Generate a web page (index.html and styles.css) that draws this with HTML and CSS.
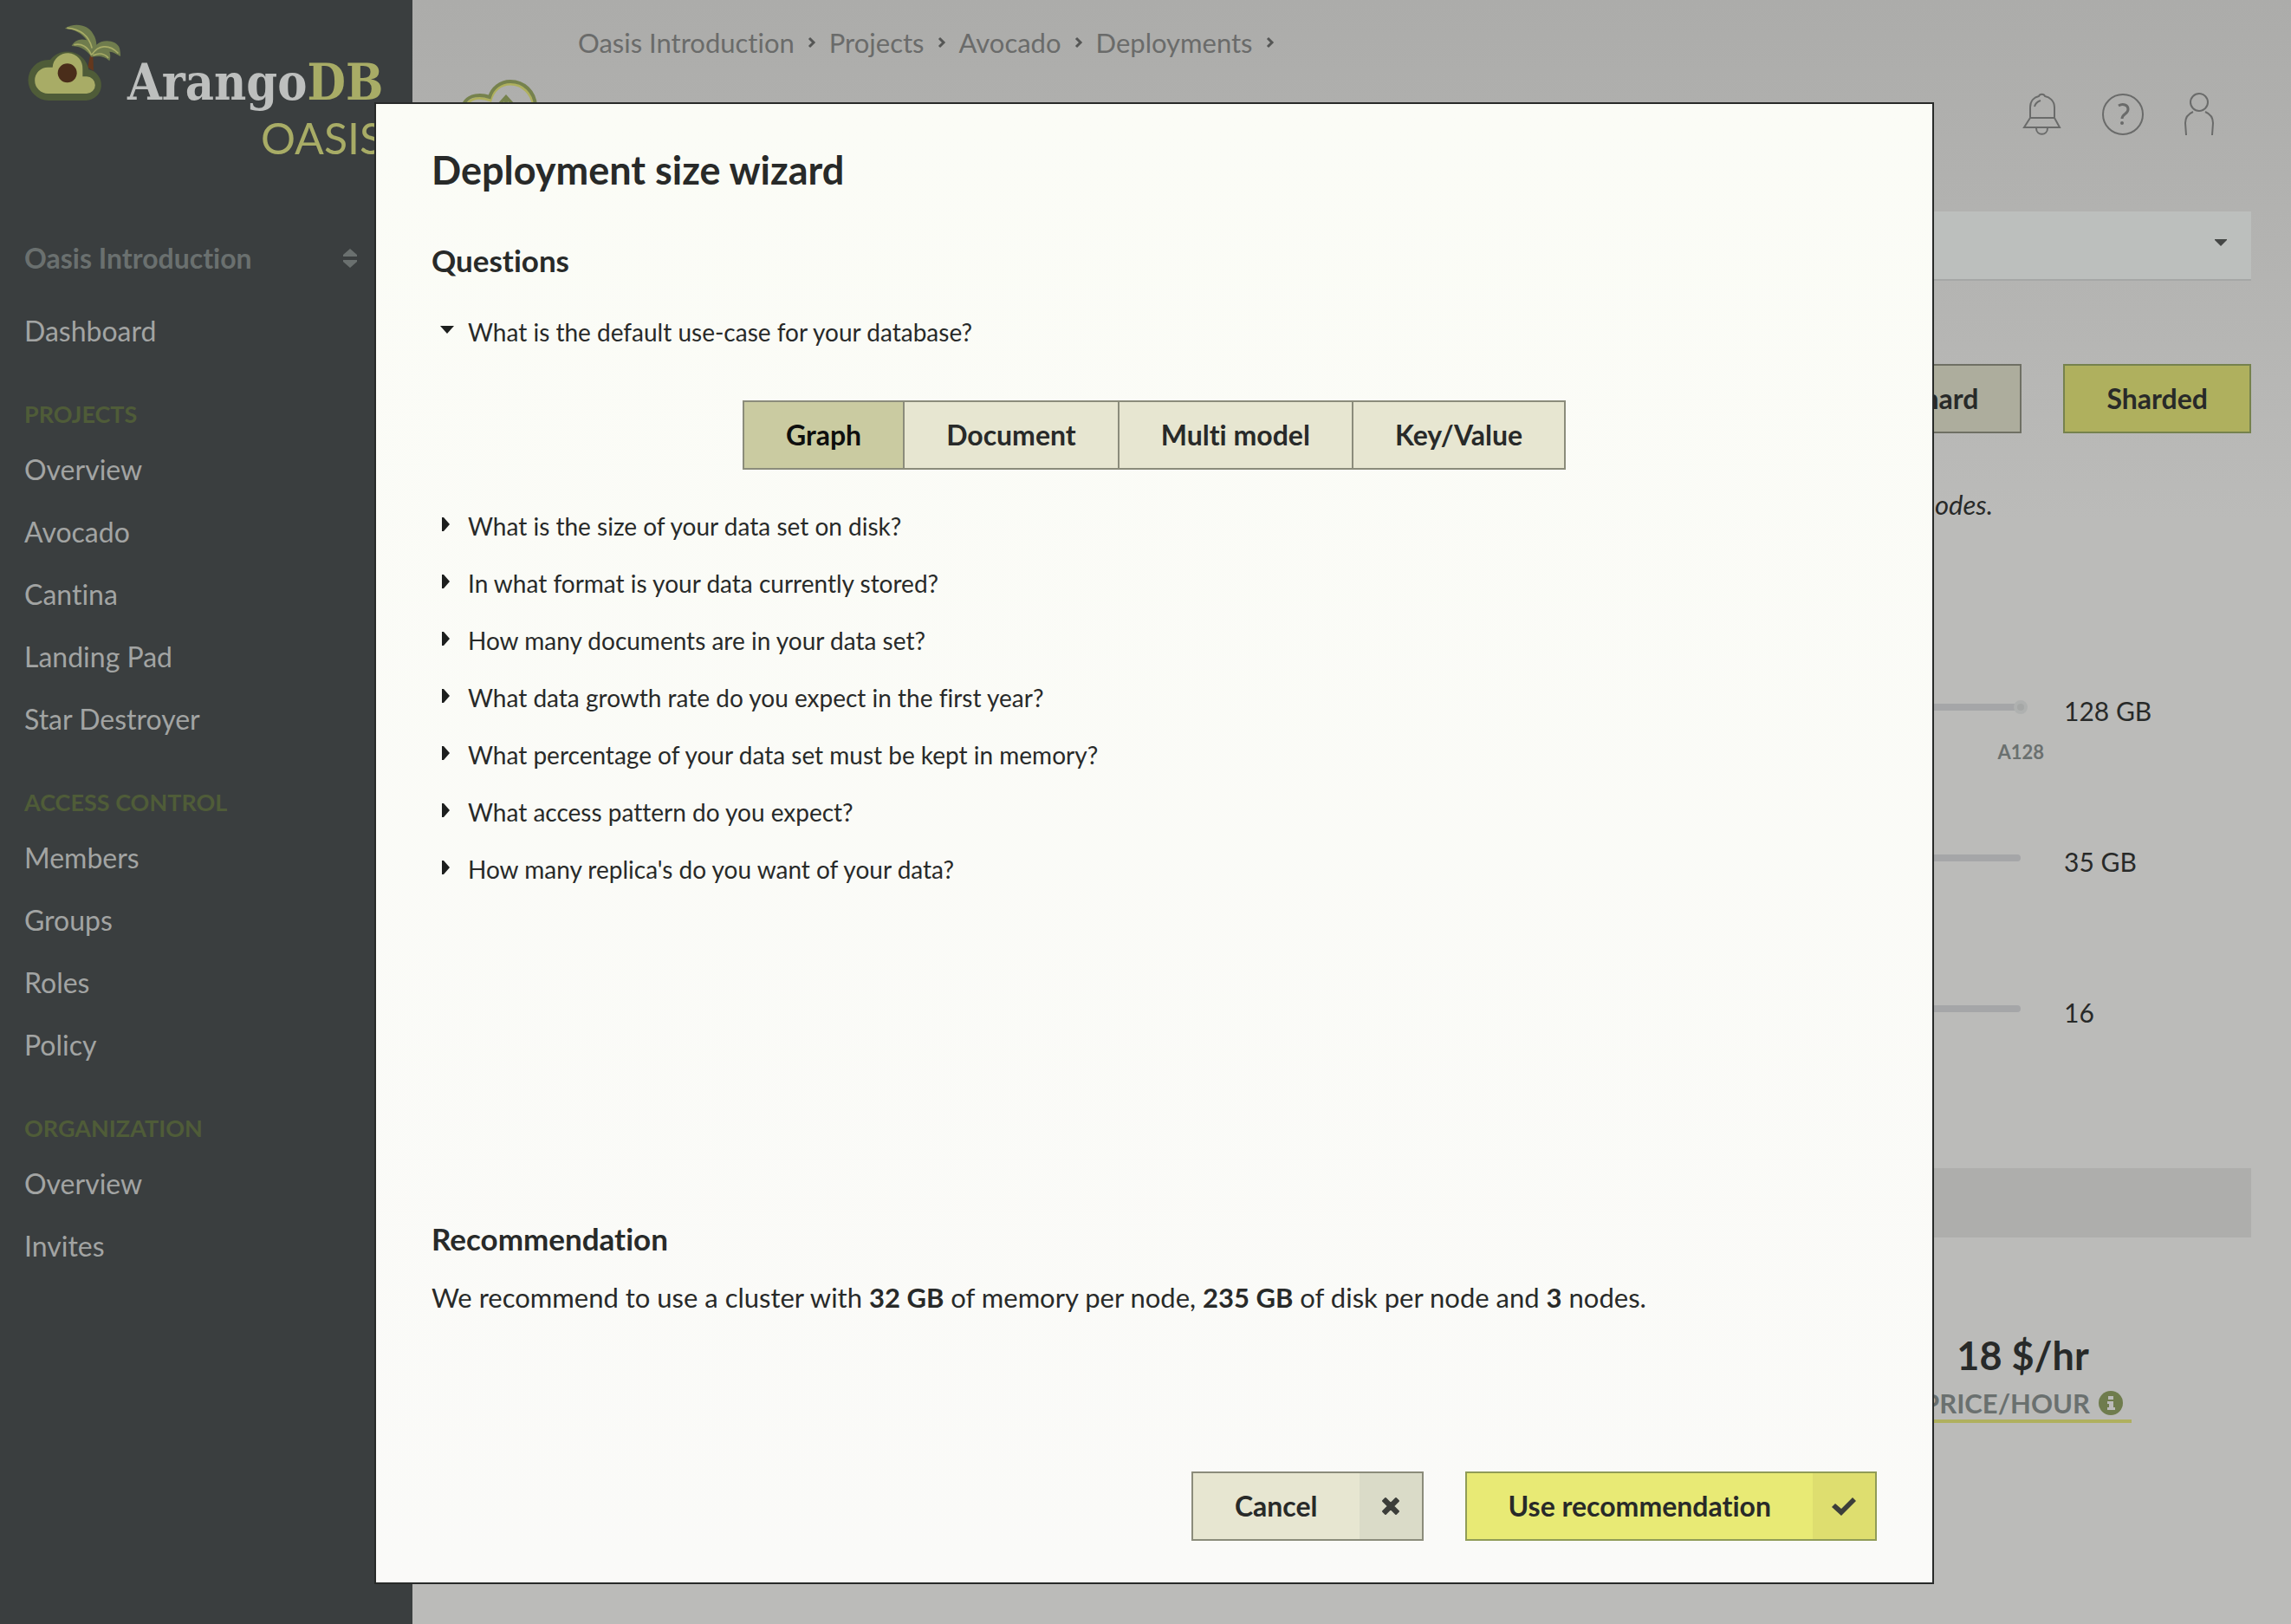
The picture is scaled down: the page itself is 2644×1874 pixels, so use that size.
FILE: index.html
```html
<!DOCTYPE html>
<html lang="en">
<head>
<meta charset="utf-8">
<meta name="viewport" content="width=device-width, initial-scale=1">
<title>ArangoDB Oasis</title>
<link rel="stylesheet" href="styles.css">
</head>
<body>
<div class="app">
  <aside class="sidebar">
    <a class="logo" href="#" aria-label="ArangoDB Oasis">
      <svg class="logo-mark" viewBox="96 80 324 270" aria-hidden="true">
        <path fill="#65381d" d="M312 190h10l2 54-20-12z"/>
        <path fill="#4f5c38" d="M168 347a70 70 0 0 1 0-141h6a75 75 0 0 1 133 34 54 54 0 0 1-9 107z"/>
        <path fill="#a8ac66" d="M166 323a45 45 0 0 1 0-91h16a52 52 0 0 1 104 6v26h14a29 29 0 0 1 0 59z"/>
        <circle cx="233" cy="252" r="33" fill="#4a2d1a"/>
        <path fill="#6f7c4d" d="M316 196c-10-16-30-37-68-38 8-18 30-28 52-20-16-22-40-38-76-40 34-22 80-14 98 18 8 12 12 26 12 38 20-20 70-18 80 12 2 10 4 20 3 28-12-6-20-14-38-16 4 10 4 22 0 32-18-18-36-18-63-14z"/>
        <path fill="none" stroke="#a8ac66" stroke-width="5" stroke-linecap="round" d="M234 96c44 4 74 28 84 68M258 154c24-6 46 8 58 34M320 186c20-30 56-36 88-4M324 190c18-8 36-6 50 8"/>
      </svg>
      <span class="logo-text">
        <span class="logo-name">Arango<span class="logo-db">DB</span></span>
        <span class="logo-product">OASIS</span>
      </span>
    </a>
    <button class="org-switch" type="button">
      <span>Oasis Introduction</span>
      <svg class="sort-icon" viewBox="0 0 16 22" aria-hidden="true"><path d="M8 0l8 7v2H0V7zM8 22l8-7v-2H0v2z"/></svg>
    </button>
    <nav class="menu" aria-label="Main">
      <a href="#">Dashboard</a>
      <h2>PROJECTS</h2>
      <a href="#">Overview</a>
      <a href="#">Avocado</a>
      <a href="#">Cantina</a>
      <a href="#">Landing Pad</a>
      <a href="#">Star Destroyer</a>
      <h2>ACCESS CONTROL</h2>
      <a href="#">Members</a>
      <a href="#">Groups</a>
      <a href="#">Roles</a>
      <a href="#">Policy</a>
      <h2>ORGANIZATION</h2>
      <a href="#">Overview</a>
      <a href="#">Invites</a>
    </nav>
  </aside>

  <main class="page">
    <nav class="breadcrumb" aria-label="Breadcrumb">
      <a href="#">Oasis Introduction</a>
      <svg viewBox="0 0 10 14" aria-hidden="true"><path d="M2 2l5 5-5 5"/></svg>
      <a href="#">Projects</a>
      <svg viewBox="0 0 10 14" aria-hidden="true"><path d="M2 2l5 5-5 5"/></svg>
      <a href="#">Avocado</a>
      <svg viewBox="0 0 10 14" aria-hidden="true"><path d="M2 2l5 5-5 5"/></svg>
      <a href="#">Deployments</a>
      <svg viewBox="0 0 10 14" aria-hidden="true"><path d="M2 2l5 5-5 5"/></svg>
    </nav>
    <div class="toolbar">
      <svg class="page-icon" viewBox="0 0 92 80" aria-hidden="true">
        <path fill="none" stroke="#afb05e" stroke-width="3" d="M24 65C4 65 0 40 10 27c5-6 15-8 26-3 3-12 12-19 23-19 14 0 25 11 27 26 0 18-4 34-18 34z"/>
        <path fill="none" stroke="#76824d" stroke-width="4" d="M24 68C0 68-4 38 7 25c5-7 17-9 28-5 3-10 12-18 24-18 16 0 28 12 29 28 0 20-4 38-20 38z"/>
        <path fill="none" stroke="#76824d" stroke-width="4" d="M43 32l11-12 11 12M54 22v32"/>
      </svg>
      <div class="tools">
        <button type="button" aria-label="Notifications">
          <svg viewBox="0 0 48 50"><path d="M11 29V17c0-8 5-12 10-13 1-3 6-3 7 0 5 1 11 5 11 13v12M11 29h28l6 11H4zM18 41c0 9 13 9 13 0M16 16c1-4 4-6 7-7"/></svg>
        </button>
        <button type="button" aria-label="Help">
          <svg viewBox="0 0 48 50"><circle cx="24" cy="25" r="23"/><path stroke-width="3" d="M19 15c5-3 11-1 11 4 0 6-7 5-7 11"/><circle class="dot" cx="23" cy="35" r="2"/></svg>
        </button>
        <button class="account" type="button" aria-label="Account">
          <svg viewBox="6 0 36 50"><circle cx="24" cy="11" r="10"/><path d="M17 22c-7 3-9 7-9 13l1 14M31 22c7 3 9 7 9 13l-1 14"/></svg>
        </button>
      </div>
    </div>

    <div class="select-box">
      <select aria-label="Provider region"><option></option></select>
      <svg class="select-caret" viewBox="0 0 14 8" aria-hidden="true"><path d="M0 0h14v1L7 8 0 1z"/></svg>
    </div>

    <div class="model-buttons">
      <button class="btn btn-muted" type="button">OneShard</button>
      <button class="btn btn-muted-primary" type="button">Sharded</button>
    </div>
    <p class="model-hint">Sharded across multiple nodes.</p>

    <div class="sliders">
      <div class="slider-row">
        <div class="slider">
          <input type="range" min="4" max="128" value="32" aria-label="Memory per node">
          <span class="slider-stop"></span>
          <span class="slider-tick">A128</span>
        </div>
        <output>128 GB</output>
      </div>
      <div class="slider-row">
        <div class="slider"><input type="range" min="10" max="35" value="20" aria-label="Disk per node"></div>
        <output>35 GB</output>
      </div>
      <div class="slider-row">
        <div class="slider"><input type="range" min="3" max="16" value="3" aria-label="Nodes"></div>
        <output>16</output>
      </div>
    </div>

    <div class="summary-bar"></div>
    <div class="price">
      <strong>18 $/hr</strong>
      <span class="price-label">PRICE/HOUR
        <svg viewBox="0 0 28 28" aria-hidden="true"><circle cx="14" cy="14" r="14" fill="#6f7c4d"/><path fill="#bbbbb9" d="M11 6h6v4h-6zM10 12h7v7h2v3H10v-3h2v-4h-2z"/></svg>
      </span>
    </div>
  </main>
</div>

<div class="overlay">
  <section class="modal" role="dialog" aria-modal="true" aria-labelledby="wizard-title">
    <h1 id="wizard-title">Deployment size wizard</h1>
    <h2>Questions</h2>
    <div class="questions">
      <details open>
        <summary>What is the default use-case for your database?</summary>
        <div class="choices">
          <button class="choice active" type="button" aria-pressed="true">Graph</button>
          <button class="choice" type="button">Document</button>
          <button class="choice" type="button">Multi model</button>
          <button class="choice" type="button">Key/Value</button>
        </div>
      </details>
      <details><summary>What is the size of your data set on disk?</summary></details>
      <details><summary>In what format is your data currently stored?</summary></details>
      <details><summary>How many documents are in your data set?</summary></details>
      <details><summary>What data growth rate do you expect in the first year?</summary></details>
      <details><summary>What percentage of your data set must be kept in memory?</summary></details>
      <details><summary>What access pattern do you expect?</summary></details>
      <details><summary>How many replica's do you want of your data?</summary></details>
    </div>
    <h2>Recommendation</h2>
    <p class="advice">We recommend to use a cluster with <strong>32 GB</strong> of memory per node, <strong>235 GB</strong> of disk per node and <strong>3</strong> nodes.</p>
    <div class="actions">
      <button class="action" type="button">
        <span class="action-label">Cancel</span>
        <span class="action-icon"><svg viewBox="0 0 24 24" aria-hidden="true"><path stroke="#3c3e3a" stroke-width="2" stroke-linejoin="round" d="M6 3l6 6 6-6 3 3-6 6 6 6-3 3-6-6-6 6-3-3 6-6-6-6z"/></svg></span>
      </button>
      <button class="action primary" type="button">
        <span class="action-label">Use recommendation</span>
        <span class="action-icon"><svg class="check" viewBox="0 0 28 22" aria-hidden="true"><path d="M24 1l4 4-17 17L0 12l4-4 7 6z"/></svg></span>
      </button>
    </div>
  </section>
</div>
</body>
</html>
```
FILE: styles.css
```css
* {
  box-sizing: border-box;
}

body {
  margin: 0;
  font-family: Lato, "Open Sans", sans-serif;
  font-size: 31px;
  font-variant-ligatures: none;
  line-height: 40px;
  color: #282a29;
}

h1, h2, p {
  margin: 0;
}

a {
  color: inherit;
  text-decoration: none;
}

button, select {
  margin: 0;
  padding: 0;
  border: 0;
  background: none;
  font: inherit;
  color: inherit;
}

.app {
  display: grid;
  grid-template-columns: 476px 1fr;
  min-height: 100vh;
}

/* Sidebar */
.sidebar {
  background: #3a3e3f;
  color: #a2a4a3;
}

.logo {
  display: flex;
  height: 262px;
  padding: 27px 0 0 32px;
}

.logo-mark {
  flex: none;
  width: 108px;
  height: 90px;
}

.logo-text {
  display: flex;
  flex-direction: column;
  align-items: flex-end;
  padding: 36px 0 0 7px;
}

.logo-name {
  font: bold 57px/64px "DejaVu Serif Condensed", "DejaVu Serif", serif;
  color: #bdbfbe;
}

.logo-db,
.logo-product {
  color: #a8ac66;
}

.logo-product {
  font-size: 50px;
  line-height: 64px;
}

.org-switch {
  display: flex;
  align-items: center;
  justify-content: space-between;
  width: 384px;
  height: 72px;
  margin-left: 28px;
  font-size: 32px;
  font-weight: bold;
  color: #6a706f;
}

.sort-icon {
  width: 16px;
  height: 22px;
  fill: currentColor;
}

.menu {
  padding: 12px 28px;
  font-size: 32px;
}

.menu a {
  display: block;
  line-height: 72px;
}

.menu h2 {
  padding-top: 32px;
  font-size: 27px;
  line-height: 56px;
  color: #4f5c38;
}

/* Page behind the dialog */
.page {
  padding: 0 46px 0 54px;
  background: linear-gradient(#acacaa, #bbbbb9 600px);
}

.breadcrumb {
  display: flex;
  align-items: center;
  gap: 15px;
  height: 92px;
  padding: 6px 0 0 137px;
  color: #6a6b6a;
}

.breadcrumb svg {
  width: 10px;
  height: 14px;
  fill: none;
  stroke: #555655;
  stroke-width: 3;
}

.toolbar {
  display: flex;
  align-items: center;
  justify-content: space-between;
  height: 80px;
}

.page-icon {
  width: 92px;
  height: 80px;
}

.tools {
  display: flex;
  gap: 46px;
  padding-right: 42px;
}

.tools button {
  width: 48px;
  height: 50px;
}

.tools .account {
  width: 36px;
}

.tools svg {
  display: block;
  width: 100%;
  height: 50px;
  fill: none;
  stroke: #6a6b6a;
  stroke-width: 2;
}

.tools .dot {
  fill: #6a6b6a;
  stroke: none;
}

.select-box {
  position: relative;
  margin-top: 72px;
}

.select-box select {
  display: block;
  width: 100%;
  height: 80px;
  padding: 0 28px;
  appearance: none;
  background: #bcbfbd;
  border-bottom: 2px solid #a5a7a6;
}

.select-caret {
  position: absolute;
  top: 32px;
  right: 28px;
  width: 14px;
  height: 8px;
  fill: #454746;
}

.model-buttons {
  display: flex;
  justify-content: flex-end;
  gap: 48px;
  margin-top: 96px;
}

.btn {
  height: 80px;
  padding: 0 48px;
  border: 2px solid;
  font-size: 32px;
  font-weight: bold;
}

.btn-muted {
  background: #adad9d;
  border-color: #6f7064;
}

.btn-muted-primary {
  background: #afb05e;
  border-color: #76824d;
}

.model-hint {
  margin-top: 62px;
  padding-right: 298px;
  text-align: right;
  font-style: italic;
}

.sliders {
  margin-top: 198px;
}

.slider-row {
  display: grid;
  grid-template-columns: 1fr 216px;
  gap: 50px;
  height: 174px;
  font-size: 30px;
}

.slider {
  position: relative;
  padding-top: 8px;
}

.slider input {
  display: block;
  width: 100%;
  height: 16px;
  margin: 0;
  appearance: none;
  background: none;
}

.slider input::-webkit-slider-runnable-track {
  height: 8px;
  border-radius: 4px;
  background: #a5a6a8;
}

.slider input::-webkit-slider-thumb {
  appearance: none;
  width: 24px;
  height: 24px;
  margin-top: -8px;
  border-radius: 50%;
  background: #76824d;
}

.slider-stop {
  position: absolute;
  top: 8px;
  right: -8px;
  width: 16px;
  height: 16px;
  border: 4px solid #afb1b0;
  border-radius: 50%;
  background: #a5a7a6;
}

.slider-tick {
  display: block;
  margin: 24px -27px 0 0;
  text-align: right;
  font-size: 22px;
  font-weight: bold;
  color: #6a706f;
}

.summary-bar {
  height: 80px;
  margin-top: 26px;
  background: #aeaeac;
}

.price {
  display: flex;
  flex-direction: column;
  align-items: center;
  width: fit-content;
  margin: 108px 138px 0 auto;
  padding: 0 10px;
  border-bottom: 4px solid #afb05e;
}

.price strong {
  font-size: 45px;
  line-height: 56px;
}

.price-label {
  display: flex;
  align-items: center;
  gap: 10px;
  margin-top: 8px;
  font-weight: bold;
  line-height: 38px;
  color: #6a706f;
}

.price-label svg {
  width: 28px;
  height: 28px;
}

/* Wizard dialog */
.overlay {
  position: fixed;
  inset: 0;
  display: flex;
  padding: 118px 412px 46px 432px;
}

.modal {
  display: flex;
  flex: 1;
  flex-direction: column;
  padding: 48px 64px;
  border: 2px solid #282a29;
  background: linear-gradient(#fbfcf6, #fafaf8);
}

.modal h1 {
  font-size: 45px;
  line-height: 56px;
}

.modal h2 {
  font-size: 35px;
  line-height: 48px;
}

.modal h1 + h2 {
  margin-top: 52px;
}

.questions {
  flex: 1;
  padding-top: 26px;
}

summary {
  display: flex;
  align-items: center;
  gap: 16px;
  padding-left: 10px;
  font-size: 28px;
  line-height: 66px;
  list-style: none;
}

summary::before {
  content: "";
  width: 16px;
  height: 16px;
  margin-top: -4px;
  background: #1d1f1e;
  clip-path: polygon(2px 0, 4px 0, 11px 8px, 4px 16px, 2px 16px);
}

details[open] summary::before {
  clip-path: polygon(0 3px, 16px 3px, 8px 12px);
}

.choices {
  display: flex;
  justify-content: center;
  padding: 46px 0 32px;
}

.choice {
  height: 80px;
  padding: 0 48px;
  border: 2px solid #8b8c7b;
  border-left-width: 0;
  background: #e7e6d1;
  font-size: 32px;
  font-weight: bold;
}

.choice:first-child {
  border-left-width: 2px;
}

.choice.active {
  background: #cacba1;
  color: #0e0f0e;
}

.advice {
  margin-top: 24px;
}

.actions {
  display: flex;
  justify-content: flex-end;
  gap: 48px;
  margin-top: 181px;
}

.action {
  display: flex;
  height: 80px;
  border: 2px solid #8b8c7b;
  background: #e7e6d1;
  font-size: 32px;
  font-weight: bold;
}

.action-label {
  padding: 0 48px;
  line-height: 76px;
}

.action-icon {
  display: flex;
  align-items: center;
  justify-content: center;
  width: 72px;
  height: 76px;
  background: #dadbc8;
}

.action svg {
  width: 24px;
  height: 24px;
  fill: #3c3e3a;
}

.action .check {
  width: 28px;
  height: 22px;
}

.action.primary {
  border-color: #909c57;
  background: #e8ea75;
}

.primary .action-icon {
  background: #dede6f;
}
```
